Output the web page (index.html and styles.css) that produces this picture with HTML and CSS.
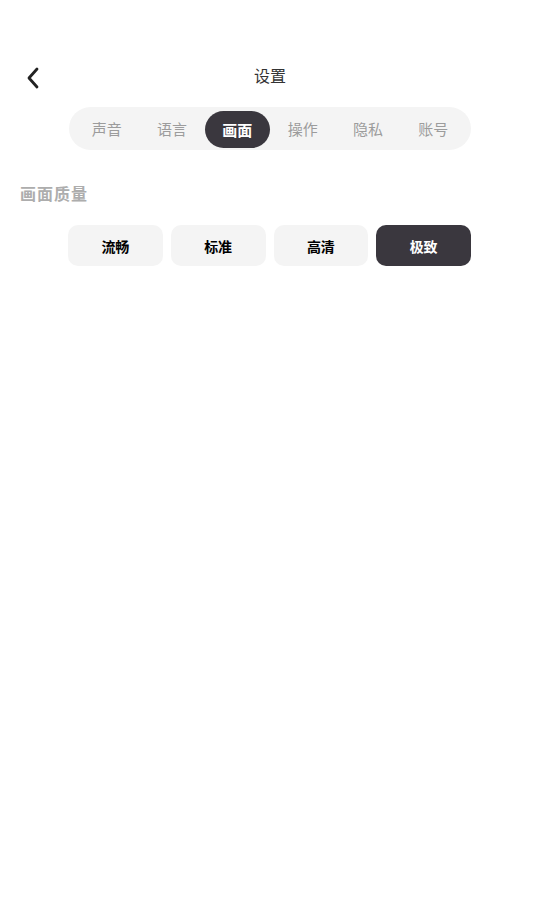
FILE: index.html
```html
<!DOCTYPE html>
<html lang="zh">
<head>
<meta charset="utf-8">
<title>设置</title>
<link rel="stylesheet" href="styles.css">
</head>
<body>
<div class="page">
  <header class="header">
    <div class="back">
      <svg width="14" height="22" viewBox="0 0 14 22"><path d="M11 2 L3 11 L11 20" fill="none" stroke="#222" stroke-width="2.8" stroke-linecap="round" stroke-linejoin="round"/></svg>
    </div>
    <div class="title">设置</div>
    <div></div>
  </header>
  <nav class="tabs">
    <div class="tab">声音</div>
    <div class="tab">语言</div>
    <div class="tab active">画面</div>
    <div class="tab">操作</div>
    <div class="tab">隐私</div>
    <div class="tab">账号</div>
  </nav>
  <div class="section-title">画面质量</div>
  <div class="options">
    <div class="opt">流畅</div>
    <div class="opt">标准</div>
    <div class="opt">高清</div>
    <div class="opt selected">极致</div>
  </div>
</div>
</body>
</html>
```
FILE: styles.css
```css
html, body {
  margin: 0;
  padding: 0;
  background: #fff;
}
body {
  font-family: "Noto Sans CJK SC", "Noto Sans", sans-serif;
  width: 540px;
  height: 912px;
}
.header {
  margin-top: 56px;
  height: 44px;
  display: grid;
  grid-template-columns: 1fr auto 1fr;
  align-items: center;
}
.back {
  padding-left: 26px;
  display: flex;
  align-items: center;
}
.back svg { display: block; }
.title {
  font-size: 16px;
  color: #333;
  line-height: 20px;
  margin-top: -6px;
}
.tabs {
  margin: 7px 69px 0 69px;
  height: 43px;
  padding: 0 5px;
  box-sizing: border-box;
  border-radius: 22px;
  background: #f4f4f4;
  display: flex;
  align-items: center;
}
.tab {
  flex: 1;
  height: 37px;
  border-radius: 19px;
  display: flex;
  align-items: center;
  justify-content: center;
  font-size: 15px;
  color: #9c9c9c;
}
.tab.active {
  background: #3a373e;
  color: #fff;
  font-weight: 700;
  margin-top: 1px;
}
.section-title {
  margin-top: 31px;
  padding-left: 20px;
  font-size: 16px;
  line-height: 24px;
  font-weight: 700;
  color: #adadad;
  letter-spacing: 1px;
}
.options {
  margin: 20px 69px 0 68px;
  display: grid;
  grid-template-columns: repeat(4, 1fr);
  gap: 8px;
}
.opt {
  height: 41px;
  border-radius: 10px;
  background: #f4f4f4;
  display: flex;
  align-items: center;
  justify-content: center;
  font-size: 14px;
  font-weight: 700;
  color: #000;
}
.opt.selected {
  background: #3a373e;
  color: #fff;
}
```
